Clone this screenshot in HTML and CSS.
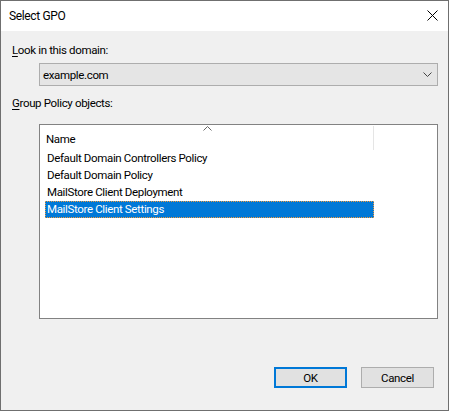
FILE: index.html
```html
<!DOCTYPE html>
<html lang="en">
<head>
<meta charset="utf-8">
<title>Select GPO</title>
<link rel="stylesheet" href="styles.css">
</head>
<body>
<div class="window">
  <div class="titlebar">
    <span class="title">Select GPO</span>
    <svg class="close" width="11" height="11" viewBox="0 0 11 11" aria-label="Close">
      <path d="M0.5 0.5 L10.5 10.5 M10.5 0.5 L0.5 10.5" stroke="#000" stroke-width="1" fill="none"/>
    </svg>
  </div>
  <div class="content">
    <div class="label label-domain"><u>L</u>ook in this domain:</div>
    <div class="combo">
      <span class="combo-value">example.com</span>
      <svg class="chevron" width="9" height="5" viewBox="0 0 9 5">
        <path d="M0.5 0.5 L4.5 4.5 L8.5 0.5" stroke="#444" stroke-width="1" fill="none"/>
      </svg>
    </div>
    <div class="label label-objects"><u>G</u>roup Policy objects:</div>
    <div class="listview">
      <div class="list-header">
        <div class="col-name">
          <svg class="sort-arrow" width="9" height="5" viewBox="0 0 9 5">
            <path d="M0.5 4.5 L4.5 0.5 L8.5 4.5" stroke="#666" stroke-width="1" fill="none"/>
          </svg>
          <span>Name</span>
        </div>
        <div class="col-divider"></div>
      </div>
      <div class="rows">
        <div class="row">Default Domain Controllers Policy</div>
        <div class="row">Default Domain Policy</div>
        <div class="row">MailStore Client Deployment</div>
        <div class="row selected">MailStore Client Settings</div>
      </div>
    </div>
    <div class="buttons">
      <button class="btn btn-default">OK</button>
      <button class="btn">Cancel</button>
    </div>
  </div>
</div>
</body>
</html>
```

FILE: styles.css
```css
html, body {
  margin: 0;
  padding: 0;
  background: #f0f0f0;
}

body {
  font-family: "Roboto", "Noto Sans", sans-serif;
  font-size: 11.5px;
  letter-spacing: -0.35px;
  line-height: 16px;
  color: #000;
}

.window {
  width: 449px;
  height: 411px;
  box-sizing: border-box;
  border: 1px solid #6f6f6f;
  display: flex;
  flex-direction: column;
  background: #f0f0f0;
}

.titlebar {
  height: 30px;
  flex: none;
  background: #fff;
  display: flex;
  align-items: center;
  justify-content: space-between;
  padding: 0 10px 0 8px;
}

.title {
  font-size: 12px;
}

.close {
  display: block;
  margin-bottom: 2px;
}

.content {
  flex: 1;
  display: flex;
  flex-direction: column;
  padding: 0 10px 0 11px;
}

.label u {
  text-decoration: underline;
  text-underline-offset: 2px;
}

.label-domain {
  margin-top: 11px;
}

.combo {
  margin: 5px 0 0 27px;
  height: 23px;
  box-sizing: border-box;
  border: 1px solid #adadad;
  background: #e5e5e5;
  display: flex;
  align-items: center;
  justify-content: space-between;
  padding: 0 5px 0 3px;
}

.chevron {
  display: block;
}

.label-objects {
  margin-top: 9px;
}

.listview {
  margin: 13px 0 0 27px;
  height: 195px;
  box-sizing: border-box;
  border: 1px solid #828282;
  background: #fff;
}

.list-header {
  height: 25px;
  display: flex;
}

.col-name {
  position: relative;
  width: 333px;
  box-sizing: border-box;
  padding: 6px 0 0 6px;
}

.sort-arrow {
  position: absolute;
  top: 1px;
  left: 163px;
  display: block;
}

.col-divider {
  width: 1px;
  margin-top: 1px;
  background: #e5e5e5;
}

.rows {
  padding-left: 5px;
}

.row {
  width: 329px;
  height: 17px;
  box-sizing: border-box;
  padding-left: 1px;
  border: 1px solid transparent;
  line-height: 15px;
}

.row.selected {
  background: #0078d7;
  color: #fff;
  border: 1px dotted #f09a3e;
}

.buttons {
  margin: auto 4px 22px 0;
  display: flex;
  justify-content: flex-end;
  gap: 14px;
}

.btn {
  width: 73px;
  height: 21px;
  box-sizing: border-box;
  margin: 0;
  padding: 0;
  border: 1px solid #adadad;
  background: #e1e1e1;
  font-family: inherit;
  font-size: 11.5px;
  letter-spacing: -0.35px;
  color: #000;
}

.btn-default {
  border: 2px solid #0078d7;
}
```
